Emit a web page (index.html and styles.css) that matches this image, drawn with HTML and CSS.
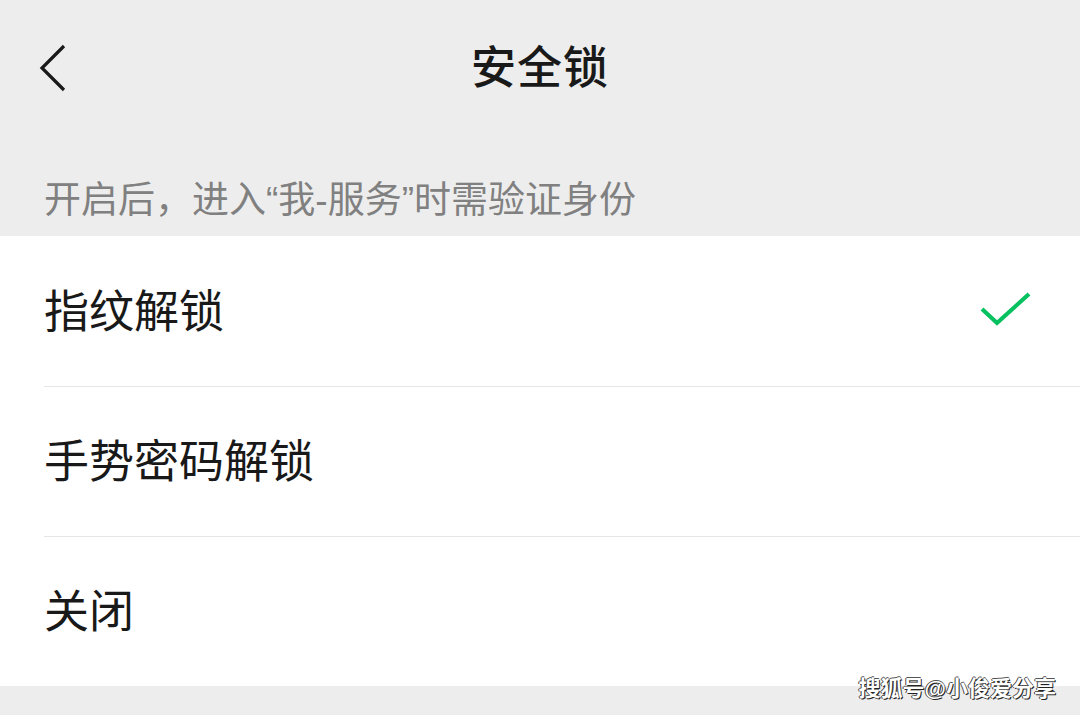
FILE: index.html
```html
<!DOCTYPE html>
<html lang="zh-CN">
    <head>
        <meta charset="utf-8" />
        <title>安全锁</title>
        <link rel="stylesheet" href="styles.css">
    </head>
    <body>
        <div class="page">
            <div class="header">
                <span class="back">
                    <svg width="30" height="50" viewBox="0 0 30 50">
                        <path d="M26 3 L4 25 L26 47" fill="none" stroke="#191919" stroke-width="3.2" />
                    </svg>
                </span>
                <div class="title">安全锁</div>
            </div>
            <div class="tip">开启后，进入“我-服务”时需验证身份</div>
            <div class="list">
                <div class="row">
                    <span class="label">指纹解锁</span>
                    <svg class="check" width="56" height="44" viewBox="0 0 56 44">
                        <path d="M4 21 L19 35 L51 6" fill="none" stroke="#07c160" stroke-width="4.2" />
                    </svg>
                </div>
                <div class="row">
                    <span class="label">手势密码解锁</span>
                </div>
                <div class="row">
                    <span class="label">关闭</span>
                </div>
            </div>
            <div class="footer"></div>
            <div class="watermark">搜狐号@小俊爱分享</div>
        </div>
    </body>
</html>
```

FILE: styles.css
```css
body {
    margin: 0;
    background: #ededed;
    font-family: "Noto Sans CJK SC", "Noto Sans", sans-serif;
}
.page {
    position: relative;
    width: 1080px;
    height: 715px;
    overflow: hidden;
}
.header {
    position: relative;
    height: 136px;
    padding-bottom: 8px;
    box-sizing: border-box;
    display: flex;
    align-items: center;
    justify-content: center;
}
.back {
    position: absolute;
    left: 38px;
    top: 43px;
}
.title {
    font-size: 45px;
    font-weight: 500;
    color: #191919;
    letter-spacing: 1px;
}
.tip {
    height: 50px;
    padding: 40px 44px 10px;
    font-family: "Liberation Sans", "Noto Sans CJK SC", sans-serif;
    font-size: 37px;
    line-height: 50px;
    color: #808080;
}
.list {
    background: #ffffff;
}
.row {
    height: 150px;
    margin-left: 44px;
    padding-right: 46px;
    padding-bottom: 6px;
    box-sizing: border-box;
    display: flex;
    align-items: center;
    justify-content: space-between;
}
.row + .row {
    border-top: 1px solid #e6e6e6;
}
.check {
    margin-top: 4px;
}
.label {
    font-size: 45px;
    color: #191919;
}
.footer {
    height: 28px;
}
.watermark {
    position: absolute;
    right: 24px;
    bottom: 11px;
    font-family: "Liberation Sans", "Noto Sans CJK SC", sans-serif;
    font-size: 22px;
    font-weight: 700;
    color: #ffffff;
    line-height: 30px;
    text-shadow: 1px 1px 0 #222, -1px 0 0 #444, 0 -1px 0 #555;
}
```
